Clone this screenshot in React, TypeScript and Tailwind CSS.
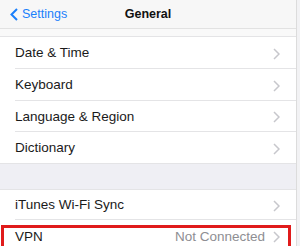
import React from "react";

const Chevron = () => (
  <svg width="7" height="12" viewBox="0 0 7 12" className="shrink-0">
    <path d="M1 1l5 5-5 5" fill="none" stroke="#c7c7cc" strokeWidth="1.5" />
  </svg>
);

const Row = ({ label, h, last }: { label: string; h: string; last?: boolean }) => (
  <div className={`flex ${h} shrink-0 items-center pl-[15px]`}>
    <div className={`flex h-full flex-1 items-center pr-[16px] pt-[2px] ${last ? "" : "border-b border-[#e4e4e6]"}`}>
      <span className="flex-1 text-[13.5px] text-[#1a1a1a]">{label}</span>
      <Chevron />
    </div>
  </div>
);

export default function App() {
  return (
    <div className="flex h-[246px] w-[300px] overflow-hidden bg-[#f2f2f4]" style={{ fontFamily: "'Liberation Sans', Arial, sans-serif" }}>
      <div className="w-[297px] shrink-0 border-r border-[#dcdcdc]">
        <div className="relative flex h-[29px] items-center border-b border-[#e2e2e2] bg-[#f7f7f7] pt-[1px]">
          <div className="flex items-center pl-[10px]">
            <svg width="8" height="13" viewBox="0 0 8 13">
              <path d="M7 1L1.5 6.5 7 12" fill="none" stroke="#1a7ffb" strokeWidth="2" />
            </svg>
            <span className="ml-[4px] text-[12.5px] text-[#1a7ffb]">Settings</span>
          </div>
          <span className="absolute left-0 right-0 text-center text-[12.5px] font-bold text-[#111]">General</span>
        </div>
        <div className="h-[8px] border-b border-[#e4e4e6] bg-[#f9f9f9]" />
        <div className="bg-white">
          <Row label="Date & Time" h="h-[32px]" />
          <Row label="Keyboard" h="h-[32px]" />
          <Row label="Language & Region" h="h-[31px]" />
          <Row label="Dictionary" h="h-[31px]" last />
        </div>
        <div className="h-[27px] border-y border-[#e4e4e6] bg-[#efeff4]" />
        <div className="bg-white">
          <Row label="iTunes Wi-Fi Sync" h="h-[30px]" />
          <div className="ml-[1px] mr-[5px] mt-[5px] h-[21px] border-[3px] border-b-0 border-[#e01b1b]">
            <div className="flex h-full items-center pl-[11px] pr-[8px]">
              <span className="flex-1 text-[13.5px] leading-[18px] text-[#1a1a1a]">VPN</span>
              <span className="mr-[8px] text-[13.5px] leading-[18px] text-[#8e8e93]">Not Connected</span>
              <Chevron />
            </div>
          </div>
        </div>
      </div>
    </div>
  );
}
